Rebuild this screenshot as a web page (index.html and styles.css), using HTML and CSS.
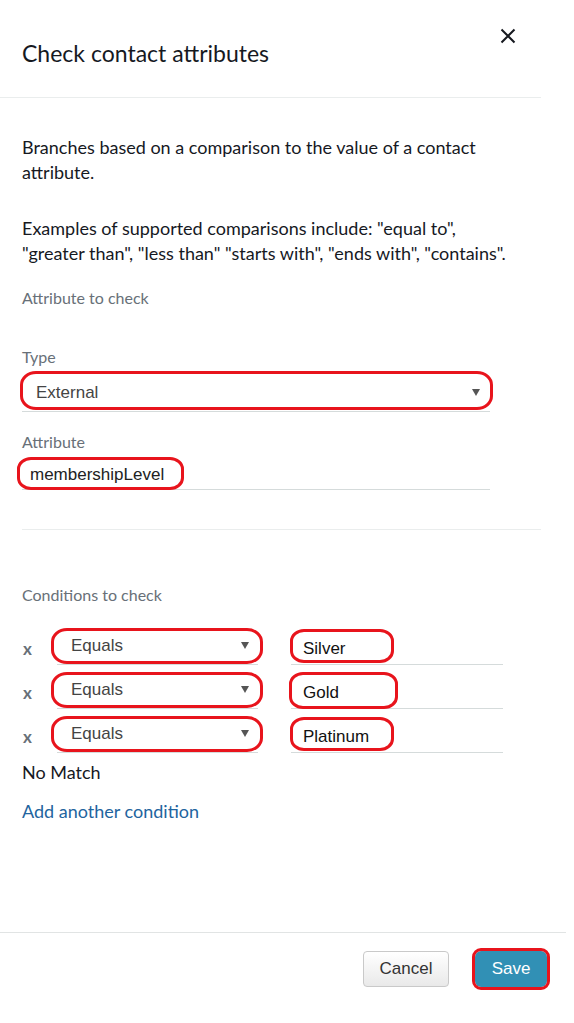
FILE: index.html
```html
<!DOCTYPE html>
<html lang="en">
<head>
<meta charset="utf-8">
<title>Check contact attributes</title>
<link rel="stylesheet" href="styles.css">
</head>
<body>
<div class="panel">
  <header class="head">
    <h1 class="title">Check contact attributes</h1>
    <button class="close" aria-label="Close">
      <svg width="16" height="16" viewBox="0 0 16 16"><path d="M1.5 1.5 L14.5 14.5 M14.5 1.5 L1.5 14.5" stroke="#16191f" stroke-width="2" fill="none"/></svg>
    </button>
  </header>

  <section class="intro">
    <p class="desc">Branches based on a comparison to the value of a contact attribute.</p>
    <p class="desc desc-2">Examples of supported comparisons include: "equal to", "greater than", "less than" "starts with", "ends with", "contains".</p>
    <div class="section-label">Attribute to check</div>

    <div class="field-label label-type">Type</div>
    <div class="select select-wide">
      <span class="select-text">External</span>
      <span class="caret"></span>
      <span class="anno anno-type"></span>
    </div>

    <div class="field-label label-attr">Attribute</div>
    <div class="input input-wide">
      <span class="input-text">membershipLevel</span>
      <span class="anno anno-attr"></span>
    </div>
  </section>

  <hr class="divider">

  <section class="conditions">
    <div class="section-label cond-label">Conditions to check</div>
    <div class="rows">
      <div class="row">
        <span class="remove">x</span>
        <div class="select select-cond">
          <span class="select-text">Equals</span>
          <span class="caret"></span>
          <span class="anno anno-cond"></span>
        </div>
        <div class="input input-cond">
          <span class="input-text value">Silver</span>
          <span class="anno anno-val"></span>
        </div>
      </div>
      <div class="row">
        <span class="remove">x</span>
        <div class="select select-cond">
          <span class="select-text">Equals</span>
          <span class="caret"></span>
          <span class="anno anno-cond"></span>
        </div>
        <div class="input input-cond">
          <span class="input-text value">Gold</span>
          <span class="anno anno-val anno-val-2"></span>
        </div>
      </div>
      <div class="row">
        <span class="remove">x</span>
        <div class="select select-cond">
          <span class="select-text">Equals</span>
          <span class="caret"></span>
          <span class="anno anno-cond"></span>
        </div>
        <div class="input input-cond">
          <span class="input-text value">Platinum</span>
          <span class="anno anno-val"></span>
        </div>
      </div>
    </div>
    <div class="no-match">No Match</div>
    <a class="add-link" href="#">Add another condition</a>
  </section>

  <footer class="foot">
    <button class="btn btn-cancel">Cancel</button>
    <button class="btn btn-save">Save</button>
  </footer>
</div>
</body>
</html>
```

FILE: styles.css
```css
* { box-sizing: border-box; }

body {
  margin: 0;
  background: #fff;
  font-family: Lato, "Open Sans", sans-serif;
  color: #16191f;
}

.panel {
  width: 574px;
  height: 1023px;
  display: flex;
  flex-direction: column;
}

.head {
  width: 541px;
  height: 98px;
  border-bottom: 1px solid #eaeded;
  display: flex;
  justify-content: space-between;
  align-items: flex-start;
  padding: 0 25px 0 22px;
}

.title {
  margin: 38px 0 0;
  font-size: 23px;
  line-height: 30px;
  font-weight: 400;
  color: #16191f;
}

.close {
  margin-top: 28px;
  padding: 0;
  border: 0;
  background: none;
  width: 16px;
  height: 16px;
  display: block;
}
.close svg { display: block; }

.intro {
  width: 541px;
  padding: 37px 0 0 22px;
}

.desc {
  margin: 0;
  font-size: 18px;
  line-height: 25px;
  width: 500px;
}
.desc-2 { margin-top: 31px; }

.section-label {
  margin-top: 22px;
  font-size: 16px;
  line-height: 20px;
  color: #687078;
}

.field-label {
  font-size: 16px;
  line-height: 20px;
  color: #687078;
}
.label-type { margin-top: 39px; }
.label-attr { margin-top: 20px; }

.select, .input {
  position: relative;
  display: flex;
  align-items: center;
  border-bottom: 1px solid #d5dbdb;
  font-family: "Liberation Sans", Arial, sans-serif;
  font-size: 17px;
}

.select {
  height: 37px;
  padding: 0 10px 1px 14px;
  justify-content: space-between;
  color: #444;
}
.select-wide { width: 468px; margin-top: 8px; }

.caret {
  width: 0;
  height: 0;
  border-left: 4px solid transparent;
  border-right: 4px solid transparent;
  border-top: 7px solid #555;
}

.input {
  height: 33px;
  padding: 4px 0 0 8px;
  color: #222;
}
.input-wide { width: 468px; margin-top: 5px; }

.anno {
  position: absolute;
  border: 3px solid #e8141c;
  pointer-events: none;
}
.anno-type {
  left: -2px; right: -3px; top: -4px; bottom: 1px;
  border-radius: 16px / 14px;
}
.anno-attr {
  left: -5px; width: 167px; top: 0; bottom: -1px;
  border-radius: 14px / 12px;
}

.divider {
  width: 519px;
  margin: 39px 0 0 22px;
  border: 0;
  border-top: 1px solid #eaeded;
  height: 0;
}

.conditions {
  padding-left: 22px;
  flex: 1;
}
.cond-label { margin-top: 55px; }

.rows {
  margin-top: 23px;
  display: flex;
  flex-direction: column;
  gap: 7px;
}

.row {
  display: flex;
  align-items: flex-start;
}

.remove {
  width: 35px;
  padding-left: 1px;
  height: 37px;
  line-height: 41px;
  font-size: 17px;
  font-weight: 700;
  color: #687078;
}

.select-cond {
  width: 201px;
  padding-left: 14px;
  padding-right: 9px;
}

.input-cond {
  width: 212px;
  height: 37px;
  margin-left: 33px;
  padding: 5px 0 0 12px;
}
.value { color: #111; }

.anno-cond {
  left: -6px; right: -5px; top: 0; bottom: 0;
  border-radius: 16px / 14px;
}
.anno-val {
  left: -1px; width: 104px; top: 1px; bottom: 1px;
  border-radius: 14px / 12px;
}
.anno-val-2 { left: -2px; width: 109px; top: 0; bottom: -1px; }

.no-match {
  margin-top: 9px;
  font-size: 18px;
  line-height: 20px;
  color: #16191f;
}

.add-link {
  display: inline-block;
  margin-top: 19px;
  font-size: 18px;
  line-height: 20px;
  color: #22649e;
  text-decoration: none;
}

.foot {
  width: 566px;
  height: 91px;
  border-top: 1px solid #e1e4e4;
  display: flex;
  justify-content: flex-end;
  align-items: flex-start;
  gap: 26px;
  padding: 18px 19px 0 0;
}

.btn {
  height: 36px;
  border-radius: 4px;
  font-family: "Liberation Sans", Arial, sans-serif;
  font-size: 17px;
  padding: 0;
}
.btn-cancel {
  width: 86px;
  border: 1px solid #c9c9c9;
  background: linear-gradient(#ffffff, #e9e9e9);
  color: #333;
}
.btn-save {
  width: 72px;
  border: 0;
  background: #3190b5;
  color: #fff;
  outline: 3px solid #e8141c;
  outline-offset: 0;
  border-radius: 6px;
}
```
